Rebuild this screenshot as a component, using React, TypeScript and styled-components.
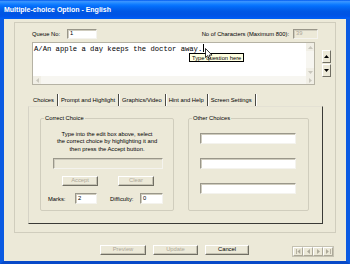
import React from "react";
import styled, { createGlobalStyle } from "styled-components";

const GlobalStyle = createGlobalStyle`
  html, body {
    margin: 0;
    padding: 0;
    background: #ece9d8;
  }
  body {
    font-family: "Liberation Sans", Arial, sans-serif;
    font-size: 5.8px;
    color: #000;
  }
`;

const TABS = ["Choices", "Prompt and Highlight", "Graphics/Video", "Hint and Help", "Screen Settings"];

const Window = styled.div`
  width: 350px;
  height: 264px;
  display: flex;
  flex-direction: column;
  overflow: hidden;
`;

const TitleBar = styled.div`
  height: 19px;
  flex: none;
  display: flex;
  align-items: center;
  padding-left: 4px;
  color: #fff;
  font-weight: bold;
  font-size: 7px;
  background: linear-gradient(
    180deg,
    #0058ee 0%,
    #3a93ff 8%,
    #288eff 14%,
    #127dff 22%,
    #036ffc 32%,
    #0262ee 46%,
    #0057e5 60%,
    #0054e3 76%,
    #0055eb 88%,
    #005bf5 94%,
    #0062ef 100%
  );
`;

const Frame = styled.div`
  flex: 1;
  display: flex;
  flex-direction: column;
  background: #ece9d8;
  border-left: 4px solid #0a5ae2;
  border-right: 4px solid #0a5ae2;
  border-bottom: 3px solid #0849c8;
  padding: 3px 0 0 10px;
`;

const OuterGroup = styled.div`
  width: 322px;
  height: 211px;
  box-sizing: border-box;
  border: 1px solid #d0cdbd;
  padding: 6px 4px 0 13px;
  display: flex;
  flex-direction: column;
`;

const TopRow = styled.div`
  height: 10px;
  margin: 0 13px 0 4px;
  display: flex;
  align-items: center;
  justify-content: space-between;
`;

const LabelGroup = styled.div<{ $gap: number }>`
  display: flex;
  align-items: center;
  gap: ${(p) => p.$gap}px;
`;

const Field = styled.div<{ $w: number; $h?: number; $disabled?: boolean }>`
  width: ${(p) => p.$w}px;
  height: ${(p) => p.$h ?? 10}px;
  box-sizing: border-box;
  flex: none;
  background: ${(p) => (p.$disabled ? "#ece9d8" : "#fff")};
  border: 1px solid;
  border-color: #9a978a #f4f3ee #f4f3ee #9a978a;
  box-shadow: inset 1px 1px 0 #cfccbe;
  color: ${(p) => (p.$disabled ? "#aca899" : "#000")};
  display: flex;
  align-items: center;
  padding-left: 2px;
  line-height: 1;
`;

const EditorRow = styled.div`
  margin: 3px 0 0 4px;
  display: flex;
  gap: 7px;
`;

const Editor = styled.div`
  position: relative;
  width: 283px;
  height: 43px;
  box-sizing: border-box;
  border: 1px solid #b5b2a4;
  background: #fff;
  display: flex;
  flex-direction: column;
`;

const EditorBody = styled.div`
  flex: 1;
  display: flex;
`;

const EditorText = styled.div`
  flex: 1;
  padding: 1px 0 0 1px;
  font-family: "Liberation Mono", "Courier New", monospace;
  font-size: 7.2px;
  line-height: 9px;
  white-space: nowrap;
`;

const Caret = styled.span`
  display: inline-block;
  width: 1px;
  height: 8px;
  margin-left: 1px;
  vertical-align: -1px;
  background: #000;
`;

const VScroll = styled.div`
  width: 8px;
  background: #f7f6f1;
  display: flex;
  flex-direction: column;
  justify-content: space-between;
`;

const HScroll = styled.div`
  height: 8px;
  background: #f7f6f1;
  display: flex;
  justify-content: space-between;
`;

const ScrollArrow = styled.div`
  width: 8px;
  height: 8px;
  display: flex;
  align-items: center;
  justify-content: center;
  background: #f1efe6;
`;

const Tooltip = styled.div`
  position: absolute;
  left: 156px;
  top: 10px;
  height: 9px;
  box-sizing: border-box;
  padding: 0 2px;
  border: 1px solid #000;
  background: #ffffe1;
  display: flex;
  align-items: center;
  white-space: nowrap;
`;

const Pointer = styled.svg`
  position: absolute;
  left: 172px;
  top: 5px;
`;

const SpinColumn = styled.div`
  margin-top: 8px;
  display: flex;
  flex-direction: column;
  gap: 1px;
`;

const SpinButton = styled.div`
  width: 9px;
  height: 13px;
  box-sizing: border-box;
  border: 1px solid;
  border-color: #fff #716f64 #716f64 #fff;
  background: #ece9d8;
  display: flex;
  align-items: center;
  justify-content: center;
`;

const TabStrip = styled.div`
  margin: 9px 0 0 2px;
  height: 12px;
  display: flex;
`;

const Tab = styled.div`
  height: 12px;
  padding: 0 3px 0 3px;
  display: flex;
  align-items: center;
  border-right: 1px solid #4a4a44;
  box-shadow: 1px 0 0 #fff;
  white-space: nowrap;
`;

const Panel = styled.div`
  width: 295px;
  height: 118px;
  box-sizing: border-box;
  border: 1px solid;
  border-color: #e4e1d4 #3a3a36 #3a3a36 #d6d3c6;
  padding: 8px 0 0 11px;
  display: flex;
  gap: 14px;
`;

const Group = styled.fieldset<{ $w: number }>`
  width: ${(p) => p.$w}px;
  height: 96px;
  box-sizing: border-box;
  margin: 0;
  padding: 0;
  min-width: 0;
  border: 1px solid #d0cdbd;
  border-radius: 2px;
  display: flex;
  flex-direction: column;
`;

const Legend = styled.legend`
  margin-left: 3px;
  padding: 0 1px;
  line-height: 7px;
`;

const Instruction = styled.div`
  margin-top: 9px;
  text-align: center;
  line-height: 7.4px;
`;

const Row = styled.div<{ $top: number; $left: number; $gap?: number }>`
  margin: ${(p) => p.$top}px 0 0 ${(p) => p.$left}px;
  display: flex;
  align-items: center;
  gap: ${(p) => p.$gap ?? 0}px;
`;

const FieldLabel = styled.div<{ $w: number; $ml?: number }>`
  width: ${(p) => p.$w}px;
  margin-left: ${(p) => p.$ml ?? 0}px;
  flex: none;
`;

const Btn = styled.div<{ $w: number; $disabled?: boolean }>`
  width: ${(p) => p.$w}px;
  height: 10px;
  box-sizing: border-box;
  border: 1px solid;
  border-color: #fff #716f64 #716f64 #fff;
  box-shadow: inset -1px -1px 0 #c5c2b2;
  background: #ece9d8;
  color: ${(p) => (p.$disabled ? "#aca899" : "#000")};
  display: flex;
  align-items: center;
  justify-content: center;
  line-height: 1;
`;

const OtherList = styled.div`
  margin: 11px 0 0 11px;
  display: flex;
  flex-direction: column;
  gap: 14px;
`;

const BottomRow = styled.div`
  margin-top: 12px;
  height: 10px;
  display: flex;
  align-items: flex-start;
`;

const ButtonGroup = styled.div`
  margin-left: 86px;
  display: flex;
  gap: 7px;
`;

const Nav = styled.div`
  margin: 1px 12px 0 auto;
  display: flex;
  border: 1px solid #c5c2b2;
`;

const NavButton = styled.div`
  width: 10px;
  height: 9px;
  box-sizing: border-box;
  border: 1px solid;
  border-color: #fff #aca899 #aca899 #fff;
  display: flex;
  align-items: center;
  justify-content: center;
`;

const Tri = ({ dir, color, bar }: { dir: "up" | "down" | "left" | "right"; color: string; bar?: boolean }) => {
  const pts = {
    up: "0,4 3.5,0 7,4",
    down: "0,0 3.5,4 7,0",
    left: "4,0 0,3.5 4,7",
    right: "0,0 4,3.5 0,7",
  }[dir];
  const vertical = dir === "up" || dir === "down";
  return (
    <svg width={vertical ? 5 : bar ? 5 : 3} height={vertical ? 3 : 5} viewBox={vertical ? "0 0 7 4" : bar ? "0 0 7 7" : "0 0 4 7"}>
      {bar && dir === "left" && <rect x="0" y="0" width="1.2" height="7" fill={color} />}
      <polygon points={pts} fill={color} transform={bar && dir === "left" ? "translate(2,0)" : undefined} />
      {bar && dir === "right" && <rect x="5.8" y="0" width="1.2" height="7" fill={color} />}
    </svg>
  );
};

export default function App() {
  return (
    <Window>
      <GlobalStyle />
      <TitleBar>Multiple-choice Option - English</TitleBar>
      <Frame>
        <OuterGroup>
          <TopRow>
            <LabelGroup $gap={7}>
              <span>Queue No:</span>
              <Field $w={30}>1</Field>
            </LabelGroup>
            <LabelGroup $gap={4}>
              <span>No of Characters (Maximum 800):</span>
              <Field $w={25} $disabled>
                39
              </Field>
            </LabelGroup>
          </TopRow>

          <EditorRow>
            <Editor>
              <EditorBody>
                <EditorText>
                  A/An apple a day keeps the doctor away.
                  <Caret />
                </EditorText>
                <VScroll>
                  <ScrollArrow>
                    <Tri dir="up" color="#c9c7bd" />
                  </ScrollArrow>
                  <ScrollArrow>
                    <Tri dir="down" color="#c9c7bd" />
                  </ScrollArrow>
                </VScroll>
              </EditorBody>
              <HScroll>
                <ScrollArrow>
                  <Tri dir="left" color="#c9c7bd" />
                </ScrollArrow>
                <ScrollArrow>
                  <Tri dir="right" color="#c9c7bd" />
                </ScrollArrow>
              </HScroll>
              <Tooltip>Type question here</Tooltip>
              <Pointer width="8" height="12" viewBox="0 0 8 12">
                <path d="M0.5 0.5 L0.5 9.5 L2.6 7.6 L4.2 11 L5.6 10.4 L4.1 7.1 L7 7.1 Z" fill="#fff" stroke="#000" strokeWidth="0.8" />
              </Pointer>
            </Editor>
            <SpinColumn>
              <SpinButton>
                <Tri dir="up" color="#000" />
              </SpinButton>
              <SpinButton>
                <Tri dir="down" color="#000" />
              </SpinButton>
            </SpinColumn>
          </EditorRow>

          <TabStrip>
            {TABS.map((t) => (
              <Tab key={t}>{t}</Tab>
            ))}
          </TabStrip>

          <Panel>
            <Group $w={134}>
              <Legend>Correct Choice</Legend>
              <Instruction>
                Type into the edit box above, select
                <br />
                the correct choice by highlighting it and
                <br />
                then press the Accept button.
              </Instruction>
              <Row $top={5} $left={12}>
                <Field $w={110} $h={11} $disabled />
              </Row>
              <Row $top={7} $left={21} $gap={20}>
                <Btn $w={36} $disabled>
                  Accept
                </Btn>
                <Btn $w={36} $disabled>
                  Clear
                </Btn>
              </Row>
              <Row $top={7} $left={7}>
                <FieldLabel $w={27}>Marks:</FieldLabel>
                <Field $w={22} $h={11}>
                  2
                </Field>
                <FieldLabel $w={30} $ml={13}>
                  Difficulty:
                </FieldLabel>
                <Field $w={23} $h={11}>
                  0
                </Field>
              </Row>
            </Group>

            <Group $w={121}>
              <Legend>Other Choices</Legend>
              <OtherList>
                <Field $w={96} $h={11} />
                <Field $w={96} $h={11} />
                <Field $w={96} $h={11} />
              </OtherList>
            </Group>
          </Panel>
        </OuterGroup>

        <BottomRow>
          <ButtonGroup>
            <Btn $w={46} $disabled>
              Preview
            </Btn>
            <Btn $w={45} $disabled>
              Update
            </Btn>
            <Btn $w={44}>Cancel</Btn>
          </ButtonGroup>
          <Nav>
            <NavButton>
              <Tri dir="left" color="#aca899" bar />
            </NavButton>
            <NavButton>
              <Tri dir="left" color="#aca899" />
            </NavButton>
            <NavButton>
              <Tri dir="right" color="#aca899" />
            </NavButton>
            <NavButton>
              <Tri dir="right" color="#aca899" bar />
            </NavButton>
          </Nav>
        </BottomRow>
      </Frame>
    </Window>
  );
}
